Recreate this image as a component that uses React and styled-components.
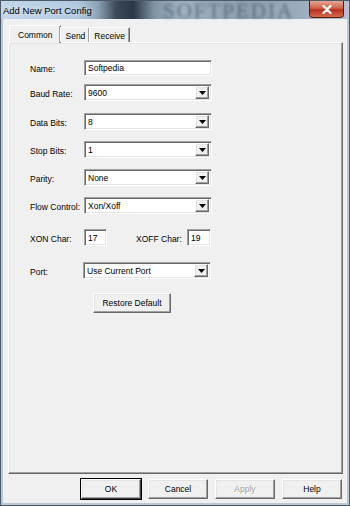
import styled, { createGlobalStyle, css } from 'styled-components';

const GlobalStyle = createGlobalStyle`
  html, body {
    margin: 0;
    padding: 0;
    background: #6f7f8f;
  }
  body {
    font-family: "Liberation Sans", Arial, sans-serif;
  }
`

const raised = css`
  border-style: solid;
  border-width: 1px;
  border-color: #ffffff #696969 #696969 #ffffff;
  box-shadow: inset -1px -1px 0 #a0a0a0, inset 1px 1px 0 #e3e3e3;
`

const sunken = css`
  border-style: solid;
  border-width: 1px;
  border-color: #a0a0a0 #ffffff #ffffff #a0a0a0;
  box-shadow: inset 1px 1px 0 #696969, inset -1px -1px 0 #e3e3e3;
`

const Window = styled.div`
  width: 350px;
  height: 506px;
  box-sizing: border-box;
  display: flex;
  flex-direction: column;
  border: 1px solid #4d5a66;
  background: #b6c7d8;
  overflow: hidden;
`

const TitleBar = styled.div`
  position: relative;
  height: 18px;
  flex: none;
  display: flex;
  align-items: center;
  padding-left: 2px;
  background: linear-gradient(90deg,
    #c3d7ea 0%, #b0c8de 22%, #8aa0b4 28%, #3d4b58 33%, #2a3744 38%,
    #8094a6 44%, #9fb1c2 52%, #8d9eae 70%, #9aabbb 85%, #b3c3d2 100%);
`

const Title = styled.span`
  font-size: 9.5px;
  color: #000;
  text-shadow: 0 0 6px rgba(255, 255, 255, 0.9);
  white-space: nowrap;
`

const Watermark = styled.span`
  position: absolute;
  left: 162px;
  top: -2px;
  font-family: "Liberation Serif", serif;
  font-size: 21px;
  letter-spacing: 2px;
  color: rgba(40, 55, 70, 0.5);
  filter: blur(1.4px);
`

const CloseButton = styled.div`
  position: absolute;
  right: 5px;
  top: 0;
  width: 33px;
  height: 16px;
  display: flex;
  align-items: center;
  justify-content: center;
  border: 1px solid #5a1c14;
  border-top: none;
  border-radius: 0 0 4px 4px;
  background: linear-gradient(180deg, #e8a493 0%, #d2604a 45%, #b8321e 55%, #d66a4c 100%);
`

const Client = styled.div`
  flex: 1;
  margin: 0 2px 2px 2px;
  background: #f0f0f0;
  display: flex;
  flex-direction: column;
  padding: 6px 4px 0 5px;
  font-size: 8.5px;
  color: #000;
`

const TabStrip = styled.div`
  display: flex;
  align-items: flex-end;
  height: 17px;
  padding-left: 1px;
  position: relative;
  z-index: 1;
`

const Tab = styled.div`
  box-sizing: border-box;
  height: ${p => (p.$active ? '18px' : '15px')};
  margin-bottom: ${p => (p.$active ? '-1px' : '0')};
  margin-left: ${p => (p.$active ? '0' : '-1px')};
  padding: 0 ${p => (p.$active ? '8px' : '4px')};
  display: flex;
  align-items: center;
  padding-top: ${p => (p.$active ? '0' : '1px')};
  background: #f0f0f0;
  border-style: solid;
  border-width: 1px 1px 0 1px;
  border-color: #ffffff #696969 transparent #ffffff;
  box-shadow: inset -1px 0 0 #a0a0a0;
  white-space: nowrap;
`

const Panel = styled.div`
  ${raised};
  height: 432px;
  box-sizing: border-box;
  display: flex;
  flex-direction: column;
  padding: 16px 0 0 21px;
`

const Row = styled.div`
  display: flex;
  align-items: center;
  margin-top: ${p => p.$mt || 0}px;
  height: 17px;
`

const Label = styled.span`
  width: ${p => p.$w || 54}px;
  margin-left: ${p => p.$ml || 0}px;
  flex: none;
  padding-top: 3px;
  white-space: nowrap;
`

const TextBox = styled.div`
  ${sunken};
  box-sizing: border-box;
  width: ${p => p.$w || 128}px;
  height: ${p => p.$h || 17}px;
  background: #fff;
  display: flex;
  align-items: center;
  padding-left: 3px;
  white-space: nowrap;
`

const Combo = styled(TextBox)`
  padding-right: 2px;
  justify-content: space-between;
`

const DropButton = styled.div`
  ${raised};
  box-sizing: border-box;
  width: 14px;
  height: 13px;
  background: #f0f0f0;
  display: flex;
  align-items: center;
  justify-content: center;
`

const Button = styled.div`
  ${raised};
  box-sizing: border-box;
  width: ${p => p.$w || 60}px;
  height: ${p => p.$h || 20}px;
  background: #f0f0f0;
  display: flex;
  align-items: center;
  justify-content: center;
  color: ${p => (p.$disabled ? '#a0a0a0' : '#000')};
  text-shadow: ${p => (p.$disabled ? '1px 1px 0 #fff' : 'none')};
  ${p => p.$default && css`
    outline: 1px solid #000;
    outline-offset: 0;
    border-color: #ffffff #404040 #404040 #ffffff;
  `}
`

const RestoreRow = styled.div`
  margin-top: 14px;
  padding-left: 63px;
`

const ButtonBar = styled.div`
  display: flex;
  justify-content: flex-end;
  gap: 7px;
  padding: 5px 1px 0 0;
`

const Arrow = () => (
  <svg width="7" height="4" viewBox="0 0 7 4">
    <path d="M0 0H7L3.5 4Z" fill="#000" />
  </svg>
)

const ComboField = ({ value, w }) => (
  <Combo $w={w}>
    <span>{value}</span>
    <DropButton><Arrow /></DropButton>
  </Combo>
)

const App = () => {
  return (
    <>
      <GlobalStyle />
      <Window>
        <TitleBar>
          <Title>Add New Port Config</Title>
          <Watermark>SOFTPEDIA</Watermark>
          <CloseButton>
            <svg width="10" height="9" viewBox="0 0 10 9">
              <path d="M1.5 1L8.5 8M8.5 1L1.5 8" stroke="#fff" strokeWidth="2.2" strokeLinecap="round" />
            </svg>
          </CloseButton>
        </TitleBar>
        <Client>
          <TabStrip>
            <Tab $active>Common</Tab>
            <Tab>Send</Tab>
            <Tab>Receive</Tab>
          </TabStrip>
          <Panel>
            <Row>
              <Label>Name:</Label>
              <TextBox $h={16}>Softpedia</TextBox>
            </Row>
            <Row $mt={8}>
              <Label>Baud Rate:</Label>
              <ComboField value="9600" />
            </Row>
            <Row $mt={12}>
              <Label>Data Bits:</Label>
              <ComboField value="8" />
            </Row>
            <Row $mt={11}>
              <Label>Stop Bits:</Label>
              <ComboField value="1" />
            </Row>
            <Row $mt={11}>
              <Label>Parity:</Label>
              <ComboField value="None" />
            </Row>
            <Row $mt={11}>
              <Label>Flow Control:</Label>
              <ComboField value="Xon/Xoff" />
            </Row>
            <Row $mt={15}>
              <Label>XON Char:</Label>
              <TextBox $w={23}>17</TextBox>
              <Label $w={51} $ml={29}>XOFF Char:</Label>
              <TextBox $w={24}>19</TextBox>
            </Row>
            <Row $mt={16}>
              <Label $w={53}>Port:</Label>
              <ComboField value="Use Current Port" />
            </Row>
            <RestoreRow>
              <Button $w={78} $h={20}>Restore Default</Button>
            </RestoreRow>
          </Panel>
          <ButtonBar>
            <Button $default>OK</Button>
            <Button>Cancel</Button>
            <Button $disabled>Apply</Button>
            <Button>Help</Button>
          </ButtonBar>
        </Client>
      </Window>
    </>
  );
}

export default App;
